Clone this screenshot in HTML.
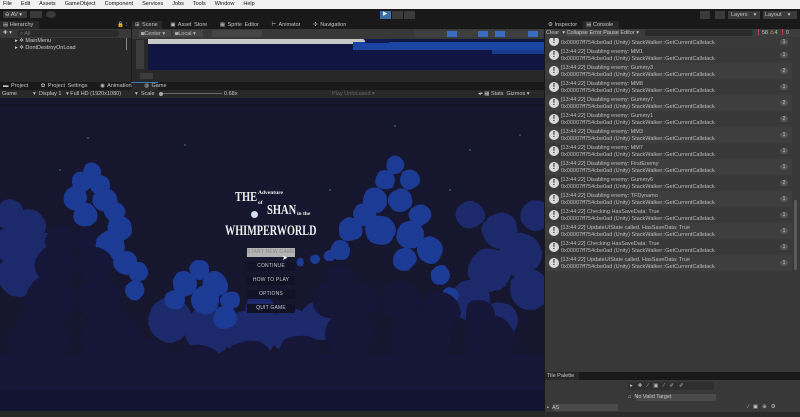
<!DOCTYPE html>
<html><head><style>
*{margin:0;padding:0;box-sizing:border-box}
body{width:800px;height:417px;overflow:hidden;background:#191919;font-family:"Liberation Sans",sans-serif;font-size:5.5px;color:#c4c4c4;position:relative}
.a{position:absolute}
.t{white-space:nowrap;position:absolute}
.row{position:absolute;left:545px;width:247px;height:16px}
.row .ic{position:absolute;left:4px;top:3px;width:10px;height:10px;border-radius:50%;background:#d8d8d8;color:#333;font-weight:bold;font-size:8px;line-height:10px;text-align:center}
.row .l1{position:absolute;left:16px;top:2px;font-size:5.5px;color:#bdbdbd;white-space:nowrap}
.row .l2{position:absolute;left:16px;top:8.5px;font-size:5.5px;color:#bdbdbd;white-space:nowrap}
.row .c{position:absolute;right:4px;top:5px;width:8px;height:6px;border-radius:3px;background:#555;color:#ccc;font-size:5px;text-align:center;line-height:6px}
.btn{position:absolute;left:247px;width:48px;height:9px;background:#121227;color:#c8c8d0;font-size:5px;text-align:center;line-height:9px;letter-spacing:.2px}
</style></head><body>
<div class="a" style="left:0;top:0;width:800px;height:9px;background:#f0f0f0"></div>
<div class="t" style="left:3px;top:1px;color:#111;font-size:5.5px;word-spacing:3px">File&nbsp; Edit&nbsp; Assets&nbsp; GameObject&nbsp; Component&nbsp; Services&nbsp; Jobs&nbsp; Tools&nbsp; Window&nbsp; Help</div>
<div class="a" style="left:3px;top:11px;width:24px;height:7px;background:#3a3a3a;border-radius:1px"></div>
<div class="t" style="left:5px;top:11.5px;color:#ccc">⊖ AV ▾</div>
<div class="a" style="left:30px;top:11px;width:12px;height:7px;background:#3a3a3a"></div>
<div class="a" style="left:46px;top:11px;width:10px;height:7px;background:#3a3a3a;border-radius:50%"></div>
<div class="a" style="left:380px;top:11px;width:11px;height:8px;background:#3b6ea6"></div>
<div class="t" style="left:383px;top:11px;color:#fff">▶</div>
<div class="a" style="left:392px;top:11px;width:11px;height:8px;background:#3a3a3a"></div>
<div class="a" style="left:404px;top:11px;width:11px;height:8px;background:#3a3a3a"></div>
<div class="a" style="left:700px;top:11px;width:10px;height:8px;background:#3a3a3a"></div>
<div class="a" style="left:715px;top:11px;width:10px;height:8px;background:#3a3a3a"></div>
<div class="a" style="left:728px;top:11px;width:32px;height:8px;background:#3a3a3a"></div>
<div class="t" style="left:731px;top:12px">Layers &nbsp;&nbsp;&nbsp;▾</div>
<div class="a" style="left:763px;top:11px;width:34px;height:8px;background:#3a3a3a"></div>
<div class="t" style="left:765px;top:12px">Layout &nbsp;&nbsp;&nbsp;▾</div>

<div class="a" style="left:0;top:21px;width:131px;height:61px;background:#282828"></div>
<div class="a" style="left:0;top:21px;width:131px;height:8px;background:#191919"></div>
<div class="a" style="left:0;top:21px;width:39px;height:8px;background:#282828"></div>
<div class="t" style="left:3px;top:22px">▤ Hierarchy</div>
<div class="t" style="left:117px;top:22px">🔒⋮</div>
<div class="a" style="left:0;top:29px;width:131px;height:9px;background:#383838"></div>
<div class="t" style="left:3px;top:30px">✚ ▾</div>
<div class="a" style="left:17px;top:30px;width:102px;height:7px;background:#2a2a2a;border-radius:3px"></div>
<div class="t" style="left:20px;top:30.5px;color:#777">⌕ All</div>
<div class="t" style="left:15px;top:38px;color:#ccc">▸ ✲ MainMenu</div>
<div class="t" style="left:15px;top:44.5px;color:#ccc">▸ ✲ DontDestroyOnLoad</div>
<div class="a" style="left:126px;top:38px;width:1px;height:12px;background:#888"></div>

<div class="a" style="left:132px;top:21px;width:412px;height:61px;background:#282828"></div>
<div class="a" style="left:132px;top:21px;width:412px;height:8px;background:#191919"></div>
<div class="a" style="left:132px;top:21px;width:30px;height:8px;background:#282828"></div>
<div class="t" style="left:135px;top:22px;word-spacing:1px">⊞ Scene &nbsp;&nbsp;&nbsp; ▣ Asset Store &nbsp;&nbsp;&nbsp; ▦ Sprite Editor &nbsp;&nbsp;&nbsp; ⊢ Animator &nbsp;&nbsp;&nbsp; ✣ Navigation</div>
<div class="a" style="left:132px;top:29px;width:412px;height:10px;background:#383838"></div>
<div class="a" style="left:139px;top:30px;width:32px;height:7px;background:#454545"></div>
<div class="t" style="left:141px;top:30.5px;color:#bbb">◙Center ▾</div>
<div class="a" style="left:173px;top:30px;width:30px;height:7px;background:#454545"></div>
<div class="t" style="left:175px;top:30.5px;color:#bbb">◙Local ▾</div>
<div class="a" style="left:212px;top:30px;width:50px;height:7px;background:#454545"></div>
<div class="a" style="left:415px;top:30px;width:128px;height:7px;background:#3f3f3f"></div>
<div class="a" style="left:447px;top:31px;width:10px;height:6px;background:#3a6cbf"></div>
<div class="a" style="left:478px;top:31px;width:10px;height:6px;background:#3a6cbf"></div>
<div class="a" style="left:495px;top:31px;width:10px;height:6px;background:#3a6cbf"></div>
<div class="a" style="left:528px;top:31px;width:10px;height:6px;background:#3a6cbf"></div>
<div class="a" style="left:148px;top:39px;width:396px;height:31px;background:#101542"></div>
<div class="a" style="left:148px;top:39px;width:217px;height:5px;background:#c8c8c8;border-radius:0 3px 3px 0"></div>
<div class="a" style="left:353px;top:42px;width:191px;height:8px;background:#1a45a0"></div>
<div class="a" style="left:365px;top:39px;width:24px;height:4px;background:#0f1a52"></div>
<div class="a" style="left:492px;top:50px;width:52px;height:4px;background:#173a8c"></div>
<div class="a" style="left:132px;top:39px;width:16px;height:43px;background:#282828"></div>
<div class="a" style="left:136px;top:40px;width:8px;height:29px;background:#3c3c3c"></div>
<div class="a" style="left:132px;top:70px;width:412px;height:12px;background:#282828"></div>
<div class="a" style="left:140px;top:73px;width:13px;height:6px;background:#3c3c3c"></div>

<div class="a" style="left:0;top:82px;width:544px;height:8px;background:#191919"></div>
<div class="a" style="left:131px;top:82px;width:27px;height:8px;background:#282828;border-top:1px solid #3a79bb"></div>
<div class="t" style="left:3px;top:83px;word-spacing:1px">▬ Project &nbsp;&nbsp;&nbsp; ✿ Project Settings &nbsp;&nbsp;&nbsp; ◉ Animation &nbsp;&nbsp;&nbsp; ◍ Game</div>
<div class="a" style="left:0;top:90px;width:544px;height:8px;background:#282828"></div>
<div class="t" style="left:2px;top:91px">Game</div>
<div class="t" style="left:33px;top:91px">▾ &nbsp;Display 1 &nbsp;&nbsp;▾ Full HD (1920x1080)</div>
<div class="t" style="left:135px;top:91px">▾ &nbsp;Scale</div>
<div class="a" style="left:160px;top:93px;width:62px;height:1px;background:#666"></div>
<div class="a" style="left:159px;top:91.5px;width:4px;height:4px;border-radius:50%;background:#aaa"></div>
<div class="t" style="left:224px;top:91px">0.68x</div>
<div class="t" style="left:332px;top:91px;color:#666">Play Unfocused ▾</div>
<div class="t" style="left:478px;top:91px">◂▪ ▦ Stats &nbsp;Gizmos ▾</div>

<svg class="a" style="left:0;top:98px" width="544" height="313" viewBox="0 98 544 313">
<defs><filter id="f" x="-10%" y="-10%" width="120%" height="120%"><feTurbulence type="fractalNoise" baseFrequency="0.05" numOctaves="2" seed="3"/><feDisplacementMap in="SourceGraphic" scale="4"/></filter></defs>
<rect x="0" y="98" width="544" height="313" fill="#16162e"/>
<rect x="0" y="104" width="544" height="2" fill="#141428"/>
<g filter="url(#f)">
<g fill="#1b296c">
<circle cx="10" cy="215" r="15"/><circle cx="30" cy="225" r="15"/><circle cx="15" cy="245" r="20"/><circle cx="45" cy="250" r="18"/><circle cx="20" cy="275" r="22"/><circle cx="50" cy="280" r="15"/>
<circle cx="470" cy="215" r="14"/><circle cx="500" cy="230" r="18"/><circle cx="535" cy="215" r="15"/><circle cx="520" cy="255" r="22"/><circle cx="490" cy="270" r="22"/><circle cx="530" cy="290" r="20"/><circle cx="470" cy="300" r="20"/><circle cx="500" cy="320" r="18"/>
<circle cx="170" cy="320" r="22"/><circle cx="210" cy="330" r="25"/><circle cx="250" cy="335" r="25"/><circle cx="290" cy="330" r="22"/><circle cx="320" cy="320" r="20"/><circle cx="260" cy="310" r="15"/>
</g>
<g fill="#1f3a94">
<circle cx="92" cy="172" r="9"/><circle cx="82" cy="182" r="10"/><circle cx="100" cy="185" r="10"/><circle cx="75" cy="198" r="12"/><circle cx="105" cy="200" r="12"/><circle cx="115" cy="212" r="10"/><circle cx="120" cy="228" r="12"/><circle cx="110" cy="245" r="14"/><circle cx="125" cy="262" r="12"/><circle cx="138" cy="272" r="10"/><circle cx="135" cy="290" r="10"/><circle cx="85" cy="215" r="12"/>
<circle cx="200" cy="270" r="10"/><circle cx="185" cy="284" r="12"/><circle cx="215" cy="284" r="12"/><circle cx="205" cy="300" r="14"/><circle cx="230" cy="300" r="10"/><circle cx="175" cy="300" r="10"/><circle cx="225" cy="318" r="12"/>
<circle cx="300" cy="262" r="4"/><circle cx="315" cy="259" r="5"/><circle cx="330" cy="256" r="6"/>
<circle cx="395" cy="165" r="9"/><circle cx="385" cy="180" r="10"/><circle cx="410" cy="180" r="10"/><circle cx="375" cy="200" r="12"/><circle cx="400" cy="200" r="12"/><circle cx="365" cy="215" r="11"/><circle cx="420" cy="215" r="11"/><circle cx="350" cy="230" r="12"/><circle cx="380" cy="230" r="15"/><circle cx="410" cy="235" r="14"/><circle cx="430" cy="250" r="13"/><circle cx="340" cy="250" r="10"/><circle cx="405" cy="260" r="12"/><circle cx="440" cy="275" r="10"/><circle cx="450" cy="295" r="8"/>
</g>
<g fill="#141639">
<circle cx="60" cy="240" r="15"/><circle cx="85" cy="240" r="12"/><circle cx="55" cy="265" r="20"/><circle cx="95" cy="265" r="18"/><circle cx="50" cy="300" r="25"/><circle cx="100" cy="300" r="22"/><circle cx="40" cy="340" r="30"/><circle cx="110" cy="340" r="30"/><circle cx="150" cy="365" r="25"/>
<circle cx="340" cy="280" r="15"/><circle cx="330" cy="300" r="18"/><circle cx="360" cy="300" r="18"/><circle cx="400" cy="300" r="20"/><circle cx="440" cy="312" r="20"/><circle cx="480" cy="315" r="15"/><circle cx="350" cy="335" r="25"/><circle cx="420" cy="340" r="30"/><circle cx="490" cy="340" r="25"/><circle cx="300" cy="360" r="25"/><circle cx="250" cy="365" r="25"/><circle cx="200" cy="370" r="25"/>
<rect x="0" y="355" width="544" height="40"/>
</g>
</g>
<rect x="0" y="390" width="544" height="21" fill="#121530"/>
<g fill="#8aa">
<circle cx="185" cy="145" r=".6"/><circle cx="395" cy="126" r=".6"/><circle cx="88" cy="138" r=".6"/><circle cx="60" cy="170" r=".6"/><circle cx="330" cy="190" r=".6"/><circle cx="450" cy="190" r=".6"/><circle cx="520" cy="135" r=".6"/><circle cx="470" cy="150" r=".6"/>
</g>
</svg>
<div class="t" style="left:235px;top:190px;color:#eee;font-size:14px;font-weight:bold;font-family:'Liberation Serif',serif;transform:scaleX(.75);transform-origin:left">THE</div>
<div class="t" style="left:258px;top:190px;color:#eee;font-size:5.5px;font-family:'Liberation Serif',serif;font-weight:bold">Adventure</div>
<div class="t" style="left:258px;top:200px;color:#eee;font-size:5.5px;font-family:'Liberation Serif',serif;font-weight:bold">of</div>
<div class="a" style="left:251px;top:211px;width:7px;height:7px;border-radius:50%;background:#cfe0f0"></div>
<div class="t" style="left:267px;top:203px;color:#eee;font-size:14px;font-weight:bold;font-family:'Liberation Serif',serif;transform:scaleX(.75);transform-origin:left">SHAN</div>
<div class="t" style="left:297px;top:211px;color:#eee;font-size:5.5px;font-family:'Liberation Serif',serif;font-weight:bold">in the</div>
<div class="t" style="left:225px;top:223px;color:#eee;font-size:15px;font-weight:bold;font-family:'Liberation Serif',serif;transform:scaleX(.68);transform-origin:left">WHIMPERWORLD</div>
<div class="btn" style="top:248px;background:#b4b4b4;color:#888">START NEW GAME</div>
<div class="btn" style="top:262px">CONTINUE</div>
<div class="btn" style="top:276px">HOW TO PLAY</div>
<div class="btn" style="top:290px">OPTIONS</div>
<div class="btn" style="top:304px">QUIT GAME</div>
<div class="t" style="left:282px;top:254px;color:#fff;font-size:7px">➤</div>
<div class="a" style="left:0;top:411px;width:544px;height:6px;background:#282828"></div>

<div class="a" style="left:544px;top:21px;width:256px;height:351px;background:#383838;border-left:1px solid #191919"></div>
<div class="a" style="left:545px;top:21px;width:255px;height:8px;background:#191919"></div>
<div class="a" style="left:583px;top:21px;width:36px;height:8px;background:#282828"></div>
<div class="t" style="left:548px;top:22px">⚙ Inspector &nbsp;&nbsp;&nbsp;&nbsp; ▤ Console</div>
<div class="a" style="left:545px;top:29px;width:255px;height:8px;background:#3c3c3c"></div>
<div class="t" style="left:546px;top:30px">Clear &nbsp;▾ <span style="background:#4a4a4a">Collapse</span> <span style="background:#4a4a4a">Error Pause</span> Editor ▾</div>
<div class="a" style="left:645px;top:30px;width:108px;height:6px;background:#2a2a2a;border-radius:2px"></div>
<div class="t" style="left:755px;top:30px">❗58 <span style="color:#e0b030">⚠</span>4 ❗0</div>
<div class="row" style="top:38px;height:9px;background:#3a3a3a;overflow:hidden"><div class="ic" style="top:-2px">!</div><div class="l2" style="top:1.5px">0x00007ff754cbe0ad (Unity) StackWalker::GetCurrentCallstack</div><div class="c" style="top:1px">1</div></div>
<div class="row" style="top:47px;background:#383838"><div class="ic">!</div><div class="l1">[13:44:22] Disabling enemy: MM1</div><div class="l2">0x00007ff754cbe0ad (Unity) StackWalker::GetCurrentCallstack</div><div class="c">1</div></div>
<div class="row" style="top:63px;background:#3e3e3e"><div class="ic">!</div><div class="l1">[13:44:22] Disabling enemy: Gummy3</div><div class="l2">0x00007ff754cbe0ad (Unity) StackWalker::GetCurrentCallstack</div><div class="c">2</div></div>
<div class="row" style="top:79px;background:#383838"><div class="ic">!</div><div class="l1">[13:44:22] Disabling enemy: MM8</div><div class="l2">0x00007ff754cbe0ad (Unity) StackWalker::GetCurrentCallstack</div><div class="c">1</div></div>
<div class="row" style="top:95px;background:#3e3e3e"><div class="ic">!</div><div class="l1">[13:44:22] Disabling enemy: Gummy7</div><div class="l2">0x00007ff754cbe0ad (Unity) StackWalker::GetCurrentCallstack</div><div class="c">2</div></div>
<div class="row" style="top:111px;background:#383838"><div class="ic">!</div><div class="l1">[13:44:22] Disabling enemy: Gummy1</div><div class="l2">0x00007ff754cbe0ad (Unity) StackWalker::GetCurrentCallstack</div><div class="c">2</div></div>
<div class="row" style="top:127px;background:#3e3e3e"><div class="ic">!</div><div class="l1">[13:44:22] Disabling enemy: MM3</div><div class="l2">0x00007ff754cbe0ad (Unity) StackWalker::GetCurrentCallstack</div><div class="c">1</div></div>
<div class="row" style="top:143px;background:#383838"><div class="ic">!</div><div class="l1">[13:44:22] Disabling enemy: MM7</div><div class="l2">0x00007ff754cbe0ad (Unity) StackWalker::GetCurrentCallstack</div><div class="c">1</div></div>
<div class="row" style="top:159px;background:#3e3e3e"><div class="ic">!</div><div class="l1">[13:44:22] Disabling enemy: FirstEnemy</div><div class="l2">0x00007ff754cbe0ad (Unity) StackWalker::GetCurrentCallstack</div><div class="c">1</div></div>
<div class="row" style="top:175px;background:#383838"><div class="ic">!</div><div class="l1">[13:44:22] Disabling enemy: Gummy6</div><div class="l2">0x00007ff754cbe0ad (Unity) StackWalker::GetCurrentCallstack</div><div class="c">2</div></div>
<div class="row" style="top:191px;background:#3e3e3e"><div class="ic">!</div><div class="l1">[13:44:22] Disabling enemy: TFDynamo</div><div class="l2">0x00007ff754cbe0ad (Unity) StackWalker::GetCurrentCallstack</div><div class="c">1</div></div>
<div class="row" style="top:207px;background:#383838"><div class="ic">!</div><div class="l1">[13:44:22] Checking HasSaveData: True</div><div class="l2">0x00007ff754cbe0ad (Unity) StackWalker::GetCurrentCallstack</div><div class="c">1</div></div>
<div class="row" style="top:223px;background:#3e3e3e"><div class="ic">!</div><div class="l1">[13:44:22] UpdateUIState called. HasSaveData: True</div><div class="l2">0x00007ff754cbe0ad (Unity) StackWalker::GetCurrentCallstack</div><div class="c">1</div></div>
<div class="row" style="top:239px;background:#383838"><div class="ic">!</div><div class="l1">[13:44:22] Checking HasSaveData: True</div><div class="l2">0x00007ff754cbe0ad (Unity) StackWalker::GetCurrentCallstack</div><div class="c">1</div></div>
<div class="row" style="top:255px;background:#3e3e3e"><div class="ic">!</div><div class="l1">[13:44:22] UpdateUIState called. HasSaveData: True</div><div class="l2">0x00007ff754cbe0ad (Unity) StackWalker::GetCurrentCallstack</div><div class="c">1</div></div>
<div class="a" style="left:794px;top:200px;width:3px;height:70px;background:#5a5a5a;border-radius:1px"></div>

<div class="a" style="left:544px;top:372px;width:256px;height:45px;background:#383838;border-left:1px solid #191919"></div>
<div class="a" style="left:545px;top:372px;width:255px;height:8px;background:#191919"></div>
<div class="a" style="left:545px;top:372px;width:34px;height:8px;background:#282828"></div>
<div class="t" style="left:547px;top:373px">Tile Palette</div>
<div class="a" style="left:628px;top:382px;width:86px;height:8px;background:#2f2f2f"></div>
<div class="t" style="left:630px;top:383px;color:#bbb;letter-spacing:5px">▸✚∕▣⁄✐✐</div>
<div class="a" style="left:636px;top:394px;width:80px;height:7px;background:#4a4a4a;border-radius:1px"></div>
<div class="t" style="left:628px;top:394px">⌂ &nbsp;No Valid Target</div>
<div class="a" style="left:553px;top:404px;width:65px;height:7px;background:#4a4a4a;border-radius:1px"></div>
<div class="t" style="left:547px;top:404.5px">▪ &nbsp;AS</div>
<div class="t" style="left:748px;top:404px;letter-spacing:4px">∕▣⊕⚙</div>
<div class="a" style="left:544px;top:412px;width:256px;height:5px;background:#2a2a2a"></div>
</body></html>
